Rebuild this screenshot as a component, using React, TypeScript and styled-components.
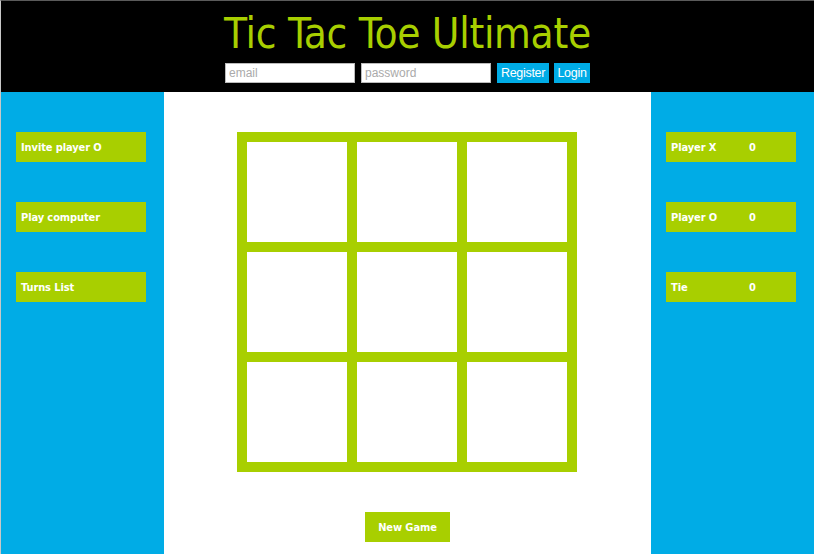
import React from "react";
import styled, { createGlobalStyle } from "styled-components";

const Global = createGlobalStyle`
  html, body { margin: 0; padding: 0; }
  body { font-family: "DejaVu Sans", Verdana, sans-serif; background: #fff; }
`;

const GREEN = "#a8cf00";
const BLUE = "#00ace6";

const Page = styled.div`
  width: 814px;
  height: 554px;
  display: grid;
  grid-template-rows: 91px 1fr;
  border-top: 1px solid #5a5a5a;
  border-left: 1px solid #c8c8c8;
  box-sizing: border-box;
  overflow: hidden;
`;

const Header = styled.header`
  background: #000;
  display: flex;
  flex-direction: column;
  align-items: center;
`;

const Title = styled.h1`
  margin: 9px 0 0 0;
  font-family: "DejaVu Sans Condensed", "DejaVu Sans", sans-serif;
  font-stretch: condensed;
  font-weight: normal;
  font-size: 42px;
  line-height: 47px;
  color: ${GREEN};
  letter-spacing: -0.3px;
`;

const AuthRow = styled.form`
  display: flex;
  gap: 6px;
  margin-top: 6px;
`;

const Input = styled.input`
  width: 130px;
  height: 20px;
  box-sizing: border-box;
  border: 1px solid #bbb;
  padding: 0 3px;
  font-family: "Liberation Sans", Arial, sans-serif;
  font-size: 12px;
  color: #333;
  &::placeholder { color: #aaa; }
`;

const AuthButton = styled.button<{ $w: number; $ml?: number }>`
  width: ${(p) => p.$w}px;
  height: 20px;
  background: ${BLUE};
  color: #fff;
  border: none;
  padding: 0;
  font-family: "Liberation Sans", Arial, sans-serif;
  font-size: 12.5px;
  letter-spacing: -0.3px;
  margin-left: ${(p) => p.$ml ?? 0}px;
`;

const Body = styled.div`
  display: grid;
  grid-template-columns: 163px 487px 1fr;
`;

const Side = styled.aside<{ $pad: number }>`
  background: ${BLUE};
  display: flex;
  flex-direction: column;
  align-items: flex-start;
  gap: 40px;
  padding: 40px 0 0 ${(p) => p.$pad}px;
`;

const Tile = styled.div`
  width: 130px;
  height: 30px;
  box-sizing: border-box;
  background: ${GREEN};
  color: #fff;
  display: flex;
  align-items: center;
  padding-left: 5px;
  font-family: "DejaVu Sans Condensed", "DejaVu Sans", sans-serif;
  font-stretch: condensed;
  font-weight: bold;
  font-size: 11px;
  letter-spacing: -0.1px;
`;

const Label = styled.span`
  width: 78px;
`;

const Center = styled.main`
  display: flex;
  flex-direction: column;
  align-items: center;
  padding-top: 40px;
`;

const Board = styled.div`
  display: grid;
  grid-template-columns: repeat(3, 100px);
  grid-template-rows: repeat(3, 100px);
  gap: 10px;
  padding: 10px;
  margin-right: 1px;
  background: ${GREEN};
`;

const Cell = styled.div`
  background: #fff;
`;

const NewGame = styled.button`
  margin-top: 40px;
  width: 85px;
  height: 30px;
  background: ${GREEN};
  color: #fff;
  border: none;
  font-family: "DejaVu Sans Condensed", "DejaVu Sans", sans-serif;
  font-stretch: condensed;
  font-weight: bold;
  font-size: 11px;
  letter-spacing: -0.1px;
`;

export default function App() {
  return (
    <>
      <Global />
      <Page>
        <Header>
          <Title>Tic Tac Toe Ultimate</Title>
          <AuthRow onSubmit={(e) => e.preventDefault()}>
            <Input placeholder="email" />
            <Input type="password" placeholder="password" />
            <AuthButton $w={52}>Register</AuthButton>
            <AuthButton $w={36} $ml={-1}>Login</AuthButton>
          </AuthRow>
        </Header>
        <Body>
          <Side $pad={15}>
            <Tile>Invite player O</Tile>
            <Tile>Play computer</Tile>
            <Tile>Turns List</Tile>
          </Side>
          <Center>
            <Board>
              {Array.from({ length: 9 }).map((_, i) => (
                <Cell key={i} />
              ))}
            </Board>
            <NewGame>New Game</NewGame>
          </Center>
          <Side $pad={15}>
            <Tile><Label>Player X</Label>0</Tile>
            <Tile><Label>Player O</Label>0</Tile>
            <Tile><Label>Tie</Label>0</Tile>
          </Side>
        </Body>
      </Page>
    </>
  );
}
